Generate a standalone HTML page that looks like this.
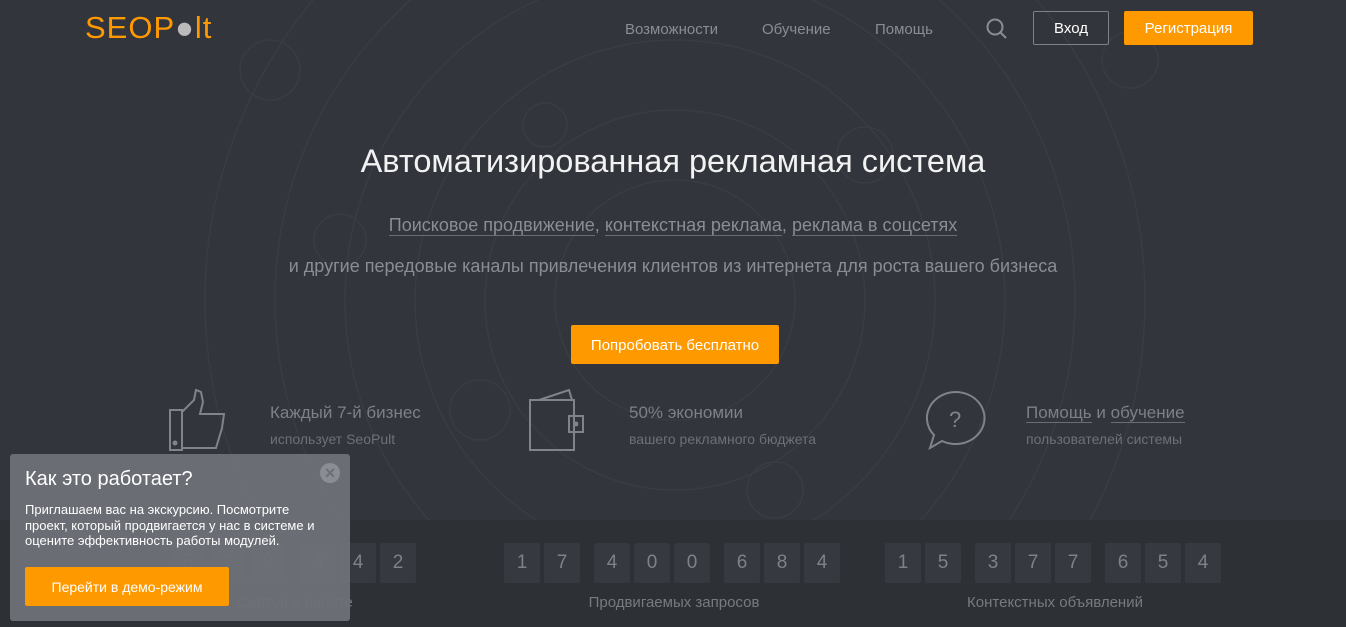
<!DOCTYPE html>
<html><head><meta charset="utf-8"><style>
*{margin:0;padding:0;box-sizing:border-box}
html,body{width:1346px;height:627px;overflow:hidden}
body{background:#32353b;font-family:"Liberation Sans",sans-serif;position:relative;color:#fff}
.a{position:absolute}
.nav{top:21px;font-size:15px;color:#8a8e94}
.num{position:absolute;top:543px;width:36px;height:40px;background:#363a40;border-radius:2px;color:#7e8288;font-size:19px;text-align:center;line-height:40px}
.lbl{position:absolute;top:594px;font-size:15px;color:#777b81;text-align:center;width:300px}
.ft{font-size:17px;color:#7d8187}
.fs{font-size:14px;color:#6d7177}
</style></head><body>
<svg class="a" style="left:0;top:0" width="1346" height="627">
<g fill="none" stroke="#393d43" stroke-width="1.5">
<circle cx="675" cy="300" r="120"/><circle cx="675" cy="300" r="190"/><circle cx="675" cy="300" r="260"/><circle cx="675" cy="300" r="330"/><circle cx="675" cy="300" r="400"/><circle cx="675" cy="300" r="470"/>
<circle cx="545" cy="125" r="22"/><circle cx="865" cy="155" r="28"/><circle cx="340" cy="240" r="26"/><circle cx="270" cy="70" r="30"/><circle cx="1130" cy="60" r="28"/><circle cx="775" cy="490" r="28"/><circle cx="480" cy="410" r="30"/>
</g></svg>
<div class="a" style="left:85px;top:10px;font-size:31px;color:#f90;letter-spacing:1px">SEOP<span style="color:#bbb">●</span>lt</div>
<div class="a nav" style="left:625px">Возможности</div>
<div class="a nav" style="left:762px">Обучение</div>
<div class="a nav" style="left:875px">Помощь</div>
<svg class="a" style="left:985px;top:17px" width="24" height="24"><circle cx="10" cy="10" r="7.5" fill="none" stroke="#8a8e94" stroke-width="2"/><path d="M15 15l6 6" stroke="#8a8e94" stroke-width="2"/></svg>
<div class="a" style="left:1033px;top:11px;width:76px;height:34px;border:1px solid #7e8288;border-radius:2px;font-size:15px;text-align:center;line-height:34px">Вход</div>
<div class="a" style="left:1124px;top:11px;width:129px;height:34px;background:#f90;border-radius:2px;font-size:15px;text-align:center;line-height:36px">Регистрация</div>
<div class="a" style="left:0;width:1346px;top:143px;text-align:center;font-size:32.5px;color:#f2f2f2">Автоматизированная рекламная система</div>
<div class="a" style="left:0;width:1346px;top:215px;text-align:center;font-size:18px;color:#8a8e94"><span style="border-bottom:1px solid #6a6e74">Поисковое продвижение</span>, <span style="border-bottom:1px solid #6a6e74">контекстная реклама</span>, <span style="border-bottom:1px solid #6a6e74">реклама в соцсетях</span></div>
<div class="a" style="left:0;width:1346px;top:256px;text-align:center;font-size:18px;color:#8a8e94">и другие передовые каналы привлечения клиентов из интернета для роста вашего бизнеса</div>
<div class="a" style="left:571px;top:325px;width:208px;height:39px;background:#f90;border-radius:2px;font-size:15px;text-align:center;line-height:41px">Попробовать бесплатно</div>
<svg class="a" style="left:165px;top:388px" width="70" height="66" fill="none" stroke="#80848a" stroke-width="2"><rect x="5" y="22" width="12" height="40"/><path d="M17 24l12-12 2-10 5 2 2 10-3 12h24l-2 14-6 20H17"/><circle cx="10" cy="55" r="1.5" fill="#80848a"/></svg>
<div class="a ft" style="left:270px;top:403px">Каждый 7-й бизнес</div>
<div class="a fs" style="left:270px;top:431px">использует SeoPult</div>
<svg class="a" style="left:525px;top:388px" width="66" height="66" fill="none" stroke="#80848a" stroke-width="2"><rect x="5" y="12" width="44" height="50"/><path d="M14 12l30-10 3 10"/><rect x="44" y="28" width="14" height="16"/><circle cx="51" cy="36" r="1.5" fill="#80848a"/></svg>
<div class="a ft" style="left:629px;top:403px">50% экономии</div>
<div class="a fs" style="left:629px;top:431px">вашего рекламного бюджета</div>
<svg class="a" style="left:922px;top:388px" width="70" height="66" fill="none" stroke="#80848a" stroke-width="2"><path d="M34 4a29 26 0 1 1-14 49l-12 7 4-13A29 26 0 0 1 34 4z"/><text x="27" y="39" fill="#80848a" stroke="none" font-size="22" font-family="Liberation Sans">?</text></svg>
<div class="a ft" style="left:1026px;top:403px"><span style="border-bottom:1px solid #6a6e74">Помощь</span> и <span style="border-bottom:1px solid #6a6e74">обучение</span></div>
<div class="a fs" style="left:1026px;top:431px">пользователей системы</div>
<div class="a" style="left:0;top:520px;width:1346px;height:107px;background:#2d3034"></div>
<div class="num" style="left:170px">5</div><div class="num" style="left:210px">7</div><div class="num" style="left:250px">9</div><div class="num" style="left:300px">4</div><div class="num" style="left:340px">4</div><div class="num" style="left:380px">2</div>
<div class="num" style="left:504px">1</div><div class="num" style="left:544px">7</div><div class="num" style="left:594px">4</div><div class="num" style="left:634px">0</div><div class="num" style="left:674px">0</div><div class="num" style="left:724px">6</div><div class="num" style="left:764px">8</div><div class="num" style="left:804px">4</div>
<div class="num" style="left:885px">1</div><div class="num" style="left:925px">5</div><div class="num" style="left:975px">3</div><div class="num" style="left:1015px">7</div><div class="num" style="left:1055px">7</div><div class="num" style="left:1105px">6</div><div class="num" style="left:1145px">5</div><div class="num" style="left:1185px">4</div>
<div class="lbl" style="left:145px">Сайтов в работе</div>
<div class="lbl" style="left:524px">Продвигаемых запросов</div>
<div class="lbl" style="left:905px">Контекстных объявлений</div>
<div class="a" style="left:10px;top:454px;width:340px;height:167px;background:#6d7077;border-radius:3px;opacity:.97"></div>
<div class="a" style="left:320px;top:463px;width:20px;height:20px;border-radius:50%;background:#8a8d93;color:#6d7077;font-size:18px;text-align:center;line-height:20px;font-weight:bold">×</div>
<div class="a" style="left:25px;top:468px;font-size:20px;color:#fff">Как это работает?</div>
<div class="a" style="left:25px;top:502px;font-size:13px;line-height:15.5px;color:#fff;width:300px">Приглашаем вас на экскурсию. Посмотрите проект, который продвигается у нас в системе и оцените эффективность работы модулей.</div>
<div class="a" style="left:25px;top:567px;width:204px;height:39px;background:#f90;border-radius:2px;font-size:14px;text-align:center;line-height:41px">Перейти в демо-режим</div>
</body></html>
